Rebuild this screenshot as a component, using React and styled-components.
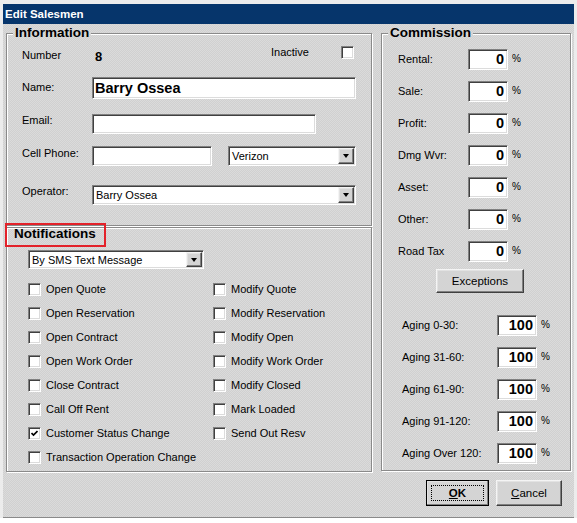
import React from "react";
import styled, { createGlobalStyle, css } from "styled-components";

// classic dialog face with the fine dither of the old form skin
const dither = css`
  background: repeating-conic-gradient(#d0d0d0 0 25%, #dbdbdb 0 50%) 0 0 / 2px 2px fixed;
`;

const GlobalStyle = createGlobalStyle`
  html, body { margin: 0; padding: 0; background: #fff; }
  body {
    font-family: "Liberation Sans", Arial, sans-serif;
    font-size: 11px;
    color: #000;
  }
`;

const Screen = styled.div`
  width: 577px;
  height: 518px;
  box-sizing: border-box;
  padding: 4px 3px 0;
  background: #ececec;
`;

const Window = styled.div`
  height: 514px;
  box-sizing: border-box;
  display: flex;
  flex-direction: column;
  border-bottom: 1px solid #8a8a8a;
  ${dither}
`;

const TitleBar = styled.div`
  flex: none;
  height: 20px;
  padding-left: 2px;
  background: #06356b;
  color: #fff;
  font-weight: bold;
  font-size: 11.5px;
  line-height: 20px;
`;

const Body = styled.div`
  display: grid;
  grid-template-columns: 366px 190px;
  column-gap: 9px;
  padding: 1px 3px 0;
`;

const Column = styled.div`
  display: flex;
  flex-direction: column;
`;

const etched = css`
  border: 1px solid #8a8a8a;
  box-shadow: inset 1px 1px 0 #fff, 1px 1px 0 #fff;
`;

const Group = styled.fieldset`
  margin: 0;
  min-width: 0;
  box-sizing: border-box;
  height: ${(p) => p.$h}px;
  padding: ${(p) => p.$pad};
  ${etched}
`;

const Legend = styled.legend`
  margin-left: ${(p) => p.$ml}px;
  padding: 0 2px;
  font-size: 13.5px;
  font-weight: bold;
  line-height: 16px;
  ${dither}
`;

const NoticeBox = styled.div`
  box-sizing: border-box;
  height: 245px;
  margin-top: 1px;
  padding: 0 0 0 21px;
  ${etched}
`;

const Caption = styled.div`
  position: relative;
  width: fit-content;
  margin: 0 0 0 -14px;
  font-size: 13.5px;
  font-weight: bold;
  line-height: 12px;

  &::after {
    content: "";
    position: absolute;
    left: -9px;
    top: -5px;
    width: 101px;
    height: 24px;
    box-sizing: border-box;
    border: 2px solid #e3222a;
  }
`;

const Row = styled.div`
  display: flex;
  align-items: flex-start;
  height: ${(p) => p.$h}px;
  padding-right: ${(p) => p.$pr || 0}px;
`;

const Label = styled.span`
  flex: none;
  width: ${(p) => p.$w || 70}px;
  padding-top: ${(p) => p.$pt || 0}px;
  line-height: 13px;
  white-space: nowrap;
`;

const Value = styled.span`
  flex: 1;
  margin: 3px 0 0 3px;
  font-size: 13px;
  font-weight: bold;
  line-height: 16px;
`;

const sunken = css`
  box-sizing: border-box;
  border: 1px solid;
  border-color: #808080 #fff #fff #808080;
  box-shadow: inset 1px 1px 0 #404040, inset -1px -1px 0 #dcdcdc;
  background: #fff;
`;

const TextBox = styled.input`
  ${sunken}
  flex: none;
  width: ${(p) => p.$w}px;
  height: ${(p) => p.$h || 20}px;
  margin: 0;
  padding: 0 ${(p) => (p.$right ? 3 : 1)}px 0 ${(p) => (p.$right ? 1 : 2)}px;
  font-family: inherit;
  font-size: ${(p) => (p.$bold ? "14.5px" : "11px")};
  font-weight: ${(p) => (p.$bold ? "bold" : "normal")};
  text-align: ${(p) => (p.$right ? "right" : "left")};
  color: #000;
  outline: none;
`;

const DropField = styled.div`
  ${sunken}
  flex: none;
  display: flex;
  align-items: center;
  width: ${(p) => p.$w}px;
  height: ${(p) => p.$h || 20}px;
  margin: ${(p) => p.$mt || 0}px 0 0 ${(p) => p.$ml || 0}px;
  padding: 1px 1px 1px 3px;
`;

const DropText = styled.span`
  flex: 1;
  font-size: 11px;
  white-space: nowrap;
`;

const raised = css`
  box-sizing: border-box;
  border: 1px solid;
  border-color: #f4f4f4 #404040 #404040 #f4f4f4;
  box-shadow: inset -1px -1px 0 #808080, inset 1px 1px 0 #e2e2e2;
  background: #d4d4d4;
`;

const DropButton = styled.span`
  ${raised}
  flex: none;
  align-self: stretch;
  width: 16px;
  display: flex;
  align-items: center;
  justify-content: center;

  &::before {
    content: "";
    border-left: 3.5px solid transparent;
    border-right: 3.5px solid transparent;
    border-top: 4px solid #000;
  }
`;

const Dropdown = ({ value, ...rest }) => (
  <DropField {...rest}>
    <DropText>{value}</DropText>
    <DropButton />
  </DropField>
);

const Box = styled.span`
  ${sunken}
  flex: none;
  width: 13px;
  height: 13px;
  display: flex;
  align-items: center;
  justify-content: center;
`;

const CheckBox = ({ checked }) => (
  <Box>
    {checked ? (
      <svg width="7" height="7" viewBox="0 0 7 7">
        <path d="M0.5 3 L2.5 5 L6.5 1" fill="none" stroke="#000" strokeWidth="1.7" />
      </svg>
    ) : null}
  </Box>
);

const Checks = styled.div`
  display: grid;
  grid-template-columns: 185px auto;
  grid-auto-rows: 24px;
  margin-top: 8px;
`;

const CheckItem = styled.label`
  display: flex;
  align-items: center;
  gap: 5px;
  white-space: nowrap;
`;

const CommRow = styled.div`
  display: flex;
  align-items: center;
  height: 32px;
  padding-left: ${(p) => p.$pl || 0}px;
`;

const Percent = styled.span`
  margin: 0 0 2px 4px;
  font-size: 10px;
`;

const Button = styled.button`
  ${raised}
  width: ${(p) => p.$w}px;
  height: ${(p) => p.$h || 26}px;
  margin: ${(p) => p.$m || 0};
  padding: 0;
  font-family: inherit;
  font-size: 11.5px;
  font-weight: ${(p) => (p.$default ? "bold" : "normal")};
  color: #000;
  ${(p) =>
    p.$default &&
    css`
      outline: 1px solid #000;
      outline-offset: -1px;
      position: relative;
      &::after {
        content: "";
        position: absolute;
        inset: 4px;
        border: 1px dotted #000;
      }
    `}
`;

const Footer = styled.div`
  display: flex;
  justify-content: flex-end;
  gap: 7px;
  padding: 8px 12px 0 0;
`;

const notices = [
  ["Open Quote", "Modify Quote"],
  ["Open Reservation", "Modify Reservation"],
  ["Open Contract", "Modify Open"],
  ["Open Work Order", "Modify Work Order"],
  ["Close Contract", "Modify Closed"],
  ["Call Off Rent", "Mark Loaded"],
  ["Customer Status Change", "Send Out Resv"],
  ["Transaction Operation Change", null],
];

const rates = ["Rental:", "Sale:", "Profit:", "Dmg Wvr:", "Asset:", "Other:", "Road Tax"];
const aging = ["Aging 0-30:", "Aging 31-60:", "Aging 61-90:", "Aging 91-120:", "Aging Over 120:"];

const App = () => {
  return (
    <Screen>
      <GlobalStyle />
      <Window>
        <TitleBar>Edit Salesmen</TitleBar>
        <Body>
          <Column>
            <Group $h={201} $pad="5px 0 0 15px">
              <Legend $ml={-9}>Information</Legend>
              <Row $h={31} $pr={17}>
                <Label $pt={3}>Number</Label>
                <Value>8</Value>
                <Label>Inactive</Label>
                <CheckBox />
              </Row>
              <Row $h={37}>
                <Label $pt={4}>Name:</Label>
                <TextBox $w={264} $h={22} $bold defaultValue="Barry Ossea" readOnly />
              </Row>
              <Row $h={32}>
                <Label>Email:</Label>
                <TextBox $w={224} defaultValue="" readOnly />
              </Row>
              <Row $h={39}>
                <Label $pt={1}>Cell Phone:</Label>
                <TextBox $w={120} defaultValue="" readOnly />
                <Dropdown $w={128} $ml={16} value="Verizon" />
              </Row>
              <Row $h={20}>
                <Label>Operator:</Label>
                <Dropdown $w={264} value="Barry Ossea" />
              </Row>
            </Group>

            <NoticeBox>
              <Caption>Notifications</Caption>
              <Dropdown $w={176} $h={19} $mt={10} value="By SMS Text Message" />
              <Checks>
                {notices.flat().map((name, i) =>
                  name ? (
                    <CheckItem key={i}>
                      <CheckBox checked={name === "Customer Status Change"} />
                      {name}
                    </CheckItem>
                  ) : (
                    <span key={i} />
                  )
                )}
              </Checks>
            </NoticeBox>
          </Column>

          <Group $h={446} $pad="2px 0 0 16px">
            <Legend $ml={-10}>Commission</Legend>
            {rates.map((name) => (
              <CommRow key={name}>
                <Label>{name}</Label>
                <TextBox $w={40} $h={21} $bold $right defaultValue="0" readOnly />
                <Percent>%</Percent>
              </CommRow>
            ))}
            <Button $w={88} $h={24} $m="2px 0 16px 38px">
              Exceptions
            </Button>
            {aging.map((name) => (
              <CommRow key={name} $pl={4}>
                <Label $w={95}>{name}</Label>
                <TextBox $w={40} $h={21} $bold $right defaultValue="100" readOnly />
                <Percent>%</Percent>
              </CommRow>
            ))}
          </Group>
        </Body>
        <Footer>
          <Button $w={63} $default>
            <u>O</u>K
          </Button>
          <Button $w={66}>
            <u>C</u>ancel
          </Button>
        </Footer>
      </Window>
    </Screen>
  );
};

export default App;
